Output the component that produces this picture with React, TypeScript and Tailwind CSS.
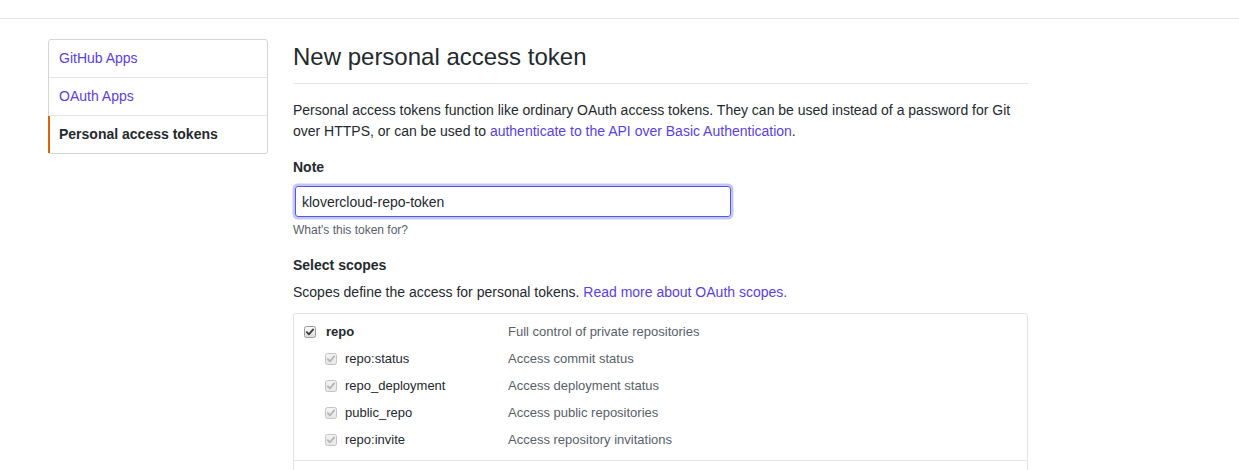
const linkColor = "text-[#5a3fe2]";

const sideMenu = [
  { label: "GitHub Apps", active: false },
  { label: "OAuth Apps", active: false },
  { label: "Personal access tokens", active: true },
];

const repoScopes = [
  { name: "repo:status", desc: "Access commit status" },
  { name: "repo_deployment", desc: "Access deployment status" },
  { name: "public_repo", desc: "Access public repositories" },
  { name: "repo:invite", desc: "Access repository invitations" },
];

function CheckBox({ disabled }: { disabled?: boolean }) {
  return (
    <svg width="12" height="12" viewBox="0 0 12 12" className="shrink-0">
      <defs>
        <linearGradient id={disabled ? "cbd" : "cbe"} x1="0" y1="0" x2="0" y2="1">
          <stop offset="0" stopColor={disabled ? "#f4f4f4" : "#fbfbfb"} />
          <stop offset="1" stopColor={disabled ? "#e6e6e6" : "#dcdcdc"} />
        </linearGradient>
      </defs>
      <rect
        x="0.5"
        y="0.5"
        width="11"
        height="11"
        rx="2"
        fill={`url(#${disabled ? "cbd" : "cbe"})`}
        stroke={disabled ? "#c4c4c4" : "#9a9a9a"}
      />
      <path
        d="M2.8 6.2 L4.9 8.3 L9.2 3.4"
        fill="none"
        stroke={disabled ? "#b4b4b4" : "#3a3a3a"}
        strokeWidth="1.8"
        strokeLinecap="round"
        strokeLinejoin="round"
      />
    </svg>
  );
}

function Sidebar() {
  return (
    <nav className="w-[220px] shrink-0 self-start rounded-[3px] border border-[#d1d5da] bg-white">
      {sideMenu.map((item, idx) => (
        <div
          key={item.label}
          className={
            "relative px-[10px] py-[8px] text-[14px] leading-[21px] " +
            (idx < sideMenu.length - 1 ? "border-b border-[#e1e4e8] " : "") +
            (item.active ? "font-bold text-[#24292e]" : linkColor)
          }
        >
          {item.active && (
            <span className="absolute -left-px top-0 bottom-0 w-[2px] bg-[#e36209]" />
          )}
          {item.label}
        </div>
      ))}
    </nav>
  );
}

function ScopeBox() {
  return (
    <div className="mt-[10px] rounded-[3px] border border-[#e1e4e8] bg-white">
      <div className="pt-[4px] pb-[7px] border-b border-[#e1e4e8]">
        <div className="flex h-[27px] items-center">
          <div className="flex w-[214px] items-center gap-[10px] pl-[10px]">
            <CheckBox />
            <span className="text-[13px] font-bold text-[#24292e]">repo</span>
          </div>
          <span className="text-[13px] text-[#586069]">Full control of private repositories</span>
        </div>
        {repoScopes.map((s) => (
          <div key={s.name} className="flex h-[27px] items-center">
            <div className="flex w-[214px] items-center gap-[8px] pl-[31px]">
              <CheckBox disabled />
              <span className="text-[13px] text-[#24292e]">{s.name}</span>
            </div>
            <span className="text-[13px] text-[#586069]">{s.desc}</span>
          </div>
        ))}
      </div>
      <div className="h-[60px]" />
    </div>
  );
}

export default function App() {
  return (
    <div
      className="h-[470px] overflow-hidden bg-white text-[#24292e]"
      style={{ fontFamily: '"Liberation Sans", Arial, sans-serif' }}
    >
      <header className="h-[19px] border-b border-[#e1e4e8]" />
      <div className="flex gap-[25px] pl-[48px] pt-5">
        <Sidebar />
        <main className="w-[735px] shrink-0">
          <h2 className="border-b border-[#e1e4e8] pb-[8px] text-[24px] leading-[36px] font-normal">
            New personal access token
          </h2>
          <p className="mt-[16px] text-[14px] leading-[21px]">
            Personal access tokens function like ordinary OAuth access tokens. They can be used instead of a password for Git over HTTPS, or can be used to{" "}
            <a className={linkColor}>authenticate to the API over Basic Authentication</a>.
          </p>
          <div className="mt-[15px] text-[14px] leading-[21px] font-bold">Note</div>
          <div className="mt-[8px] pl-[2px]">
            <input
              readOnly
              value="klovercloud-repo-token"
              className="h-[31px] w-[436px] rounded-[3px] border border-[#5158e6] px-[6px] text-[14px] text-[#24292e] outline-none shadow-[0_0_0_2.5px_rgba(86,92,232,0.35)]"
              style={{ fontFamily: '"Liberation Sans", Arial, sans-serif' }}
            />
          </div>
          <div className="mt-[4px] text-[12px] leading-[18px] text-[#586069]">What's this token for?</div>
          <div className="mt-[16px] text-[14px] leading-[21px] font-bold">Select scopes</div>
          <p className="mt-[6px] text-[14px] leading-[21px]">
            Scopes define the access for personal tokens.{" "}
            <a className={linkColor}>Read more about OAuth scopes.</a>
          </p>
          <ScopeBox />
        </main>
      </div>
    </div>
  );
}
